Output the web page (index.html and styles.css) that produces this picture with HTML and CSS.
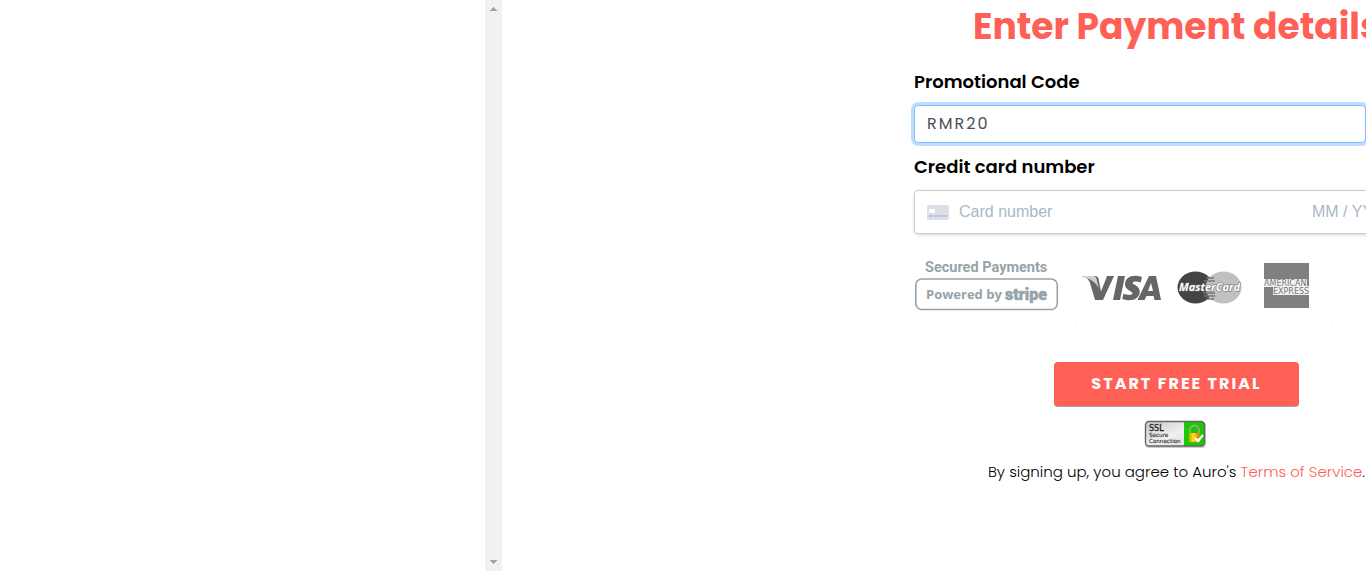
FILE: index.html
```html
<!DOCTYPE html>
<html lang="en">
<head>
<meta charset="utf-8">
<meta name="viewport" content="width=device-width, initial-scale=1">
<title>Enter Payment details</title>
<link rel="stylesheet" href="styles.css">
</head>
<body>
<div class="page">
  <div class="side"></div>
  <div class="scrollbar" aria-hidden="true">
    <svg class="arrow" viewBox="0 0 17 17" shape-rendering="crispEdges"><path d="M8 7h1v1h1v1h1v1h1v1H5v-1h1V9h1V8h1z"/></svg>
    <svg class="arrow" viewBox="0 0 17 17" shape-rendering="crispEdges"><path d="M5 6h7v1h-1v1h-1v1H9v1H8V9H7V8H6V7H5z"/></svg>
  </div>
  <main class="content">
    <form class="payment">
      <h1 class="title wide">Enter Payment details</h1>
      <label class="label" for="promo">Promotional Code</label>
      <input class="promo" id="promo" type="text" value="RMR20">
      <label class="label" for="card">Credit card number</label>
      <div class="card-field wide">
        <svg class="card-icon" viewBox="0 0 22 15">
          <rect width="22" height="15" rx="1.500" fill="#dcdfe8"/>
          <rect x="2" y="4" width="6" height="4" rx="1" fill="#fff"/>
          <path d="M2 11h4M7 11h3M11 11h4M16 11h4" stroke="#b4b9c7" stroke-width="1.400"/>
        </svg>
        <input class="card-input" id="card" type="text" placeholder="Card number">
        <input class="expiry" type="text" placeholder="MM / YY" aria-label="Expiry date">
        <input class="cvc" type="text" placeholder="CVC" aria-label="CVC">
      </div>
      <svg class="brands" viewBox="0 0 425 75" role="img" aria-label="Secured payments, powered by Stripe">
        <g fill="#96a3a8" font-family="Roboto, sans-serif" font-weight="700">
          <text x="11" y="22" font-size="14.500">Secured Payments</text>
          <rect x="1.800" y="29" width="141.500" height="30.500" rx="6" fill="none" stroke="#96a3a8" stroke-width="1.600"/>
          <text x="12" y="49" font-size="13" font-family="'Open Sans', sans-serif" font-weight="700">Powered by</text>
          <text x="91" y="50" font-size="16" stroke="#96a3a8" stroke-width=".5" font-weight="900">stripe</text>
        </g>
        <g fill="#666">
          <path d="M170 26h11c2 0 3 1 3.500 2.500l2.500 13 6-15.500h7l-11 24h-8l-5-17c-1-3-3-5-6-7z"/>
          <path d="M168 26h11c2 0 3 1 3.500 2.500L185 39c-3-7-8-10-17-12z" fill="#ccced2"/>
          <path d="M204 26h7l-5 24h-7z"/>
          <path d="M228 27l-1.300 5.500c-3-1.500-7.500-1.500-8 .3-.6 2.200 7 2.500 7 8.700 0 8-8.500 10.500-17.500 7.500l1.300-5.500c4 2 8.500 1.800 9 0 .7-2.500-7.500-3-7.500-9 0-8 8.500-10.500 17-7.500z"/>
          <path fill-rule="evenodd" d="M235 26h7l5 24h-6.500l-1-4h-7l-2 4h-7zM237 33l-3 8h5z"/>
        </g>
        <ellipse cx="281.500" cy="37.500" rx="18" ry="16" fill="#444"/>
        <ellipse cx="309.500" cy="37.500" rx="18" ry="16" fill="#bfc1c1"/>
        <path d="M292 28h8M290 31h11M289 43h12M290 46h11M292 49h8" stroke="#777" stroke-width="1.300"/>
        <text x="265" y="41" fill="#fff" stroke="#666" stroke-width="1" paint-order="stroke" font-family="'Open Sans', sans-serif" font-size="11" font-weight="700" font-style="italic">MasterCard</text>
        <rect x="350" y="13" width="45" height="45" fill="#808080"/>
        <path d="M350 29h43v7h2v9h-36v-8h-9z" fill="#f2f2f2"/>
        <g fill="#777" font-family="'DejaVu Sans', sans-serif" font-size="8">
          <text x="350" y="35.500">AMERICAN</text>
          <text x="359" y="44">EXPRESS</text>
        </g>
        <path d="M162 72h1M418 72h1" stroke="#ddd"/>
      </svg>
      <div class="actions wide">
        <button class="submit" type="button">START FREE TRIAL</button>
        <svg class="ssl" viewBox="0 0 66 30" role="img" aria-label="SSL Secure Connection">
          <defs>
            <linearGradient id="plate" x2="1" y2="1"><stop stop-color="#c8c8c8"/><stop offset=".5" stop-color="#f0f0f0"/><stop offset="1" stop-color="#d8d8d8"/></linearGradient>
            <linearGradient id="gold" x2="1"><stop stop-color="#d89b00"/><stop offset=".4" stop-color="#ffe01e"/><stop offset="1" stop-color="#c77e00"/></linearGradient>
          </defs>
          <rect x="1" y="3" width="61" height="26" rx="4" fill="#ccc"/>
          <rect x="1.500" y="2.500" width="59" height="24.500" rx="3.500" fill="url(#plate)"/>
          <path d="M40 2.500h17a3.500 3.500 0 0 1 3.500 3.500v17.500a3.500 3.500 0 0 1-3.500 3.500H40z" fill="#1cc900"/>
          <rect x="1.500" y="2.500" width="59" height="24.500" rx="3.500" fill="none" stroke="#666" stroke-width="1.400"/>
          <g fill="#222" font-family="'DejaVu Sans', sans-serif">
            <text x="5" y="12" font-size="8" stroke="#222" stroke-width=".3">SSL</text>
            <text x="5" y="17.500" font-size="5.600" stroke="#222" stroke-width=".1">Secure</text>
            <text x="5" y="23.500" font-size="5.600" stroke="#222" stroke-width=".1">Connection</text>
          </g>
          <path d="M46 15v-4a4.500 4.500 0 0 1 9 0v4" fill="none" stroke="#8fae7c" stroke-width="1.800"/>
          <rect x="45" y="14" width="11" height="9" rx="1" fill="url(#gold)"/>
          <path d="M51 19l3 3 5-6" fill="none" stroke="#fff" stroke-width="2.200"/>
        </svg>
        <p class="terms">By signing up, you agree to Auro's <a class="link" href="#terms">Terms of Service</a>.</p>
      </div>
    </form>
  </main>
</div>
</body>
</html>
```
FILE: styles.css
```css
* {
  box-sizing: border-box;
}

body {
  margin: 0;
  background: #fff;
  color: #000;
  font-family: Poppins, Inter, sans-serif;
  overflow: hidden;
}

.page {
  display: grid;
  grid-template-columns: 485fr 17px 864fr;
  min-height: 100vh;
}

.scrollbar {
  display: flex;
  flex-direction: column;
  justify-content: space-between;
  background: #f1f1f1;
}

.arrow {
  display: block;
  width: 17px;
  height: 17px;
  fill: #a3a3a3;
}

.content {
  display: grid;
  grid-template-columns: 412fr 452fr;
  min-width: 0;
  overflow: hidden;
}

.payment {
  grid-column: 2;
  display: flex;
  flex-direction: column;
  align-items: flex-start;
  min-width: 0;
}

.wide {
  width: 525px;
}

.title {
  margin: 0;
  color: #ff6056;
  font-size: 36px;
  font-weight: 700;
  line-height: 54px;
  text-align: center;
  white-space: nowrap;
}

.label {
  margin-top: 14px;
  font-size: 18px;
  font-weight: 600;
  line-height: 27px;
}

.promo {
  width: 100%;
  height: 38px;
  margin-top: 10px;
  padding: 5px 12px 7px;
  border: 1px solid #80bdff;
  border-radius: 4px;
  outline: 0;
  box-shadow: 0 0 0 3px #bfdeff;
  color: #495057;
  font-family: inherit;
  font-size: 16px;
  letter-spacing: 2px;
}

.promo + .label {
  margin-top: 10px;
}

.card-field {
  display: flex;
  align-items: center;
  height: 44px;
  margin-top: 10px;
  padding: 0 12px;
  border: 1px solid #ccc;
  border-radius: 4px;
  box-shadow: 0 1px 3px #cfd7df;
}

.card-icon {
  flex: none;
  width: 22px;
  height: 15px;
  margin-right: 10px;
}

.card-input,
.expiry,
.cvc {
  min-width: 0;
  padding: 0;
  border: 0;
  outline: 0;
  background: none;
  font-family: "Liberation Sans", Arial, sans-serif;
  font-size: 16px;
}

.card-input {
  flex: 1;
}

.expiry {
  width: 72px;
}

.cvc {
  width: 42px;
}

.card-input::placeholder,
.expiry::placeholder,
.cvc::placeholder {
  color: #aab7c4;
}

.brands {
  flex: none;
  width: 425px;
  height: 75px;
  margin-top: 16px;
}

.actions {
  display: flex;
  flex-direction: column;
  align-items: center;
  margin-top: 37px;
}

.submit {
  width: 245px;
  height: 45px;
  padding: 0 0 2px;
  border: 0;
  border-bottom: 1px solid #a9a0a0;
  border-radius: 4px;
  background: #ff6056;
  color: #fff;
  font-family: inherit;
  font-size: 16px;
  font-weight: 700;
  letter-spacing: 2px;
}

.ssl {
  width: 66px;
  height: 30px;
  margin-top: 12px;
}

.terms {
  margin: 11px 0 0;
  font-size: 15px;
  font-weight: 300;
  line-height: 23px;
}

.link {
  color: #ff6056;
  text-decoration: none;
}
```
